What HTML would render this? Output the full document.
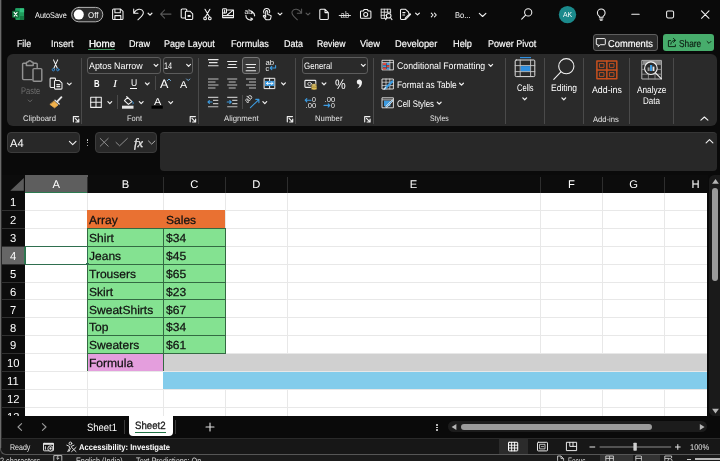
<!DOCTYPE html>
<html><head><meta charset="utf-8"><title>Excel</title>
<style>
html,body{margin:0;padding:0;background:#0a0a0a;}
body{width:720px;height:461px;position:relative;overflow:hidden;font-family:"Liberation Sans",sans-serif;}
.r{position:absolute;display:block;}
.t{position:absolute;white-space:nowrap;line-height:1;transform-origin:0 50%;text-rendering:geometricPrecision;}
#app{position:absolute;left:0;top:0;width:720px;height:461px;overflow:hidden;filter:contrast(1);}
</style></head><body><div id="app">
<div class="r" style="left:0.00px;top:0.00px;width:720.00px;height:461.00px;background:#0a0a0a;"></div>
<span class="t" style="left:35.20px;top:12px;font-size:8.20px;color:#ffffff;transform:scaleX(0.8943);">AutoSave</span>
<span class="t" style="left:455.30px;top:11px;font-size:8.30px;color:#ffffff;transform:scaleX(0.9080);">Bo...</span>
<span class="t" style="left:16.80px;top:40px;font-size:9.90px;color:#ffffff;transform:scaleX(0.8901);-webkit-text-stroke:0.15px #fff;">File</span>
<span class="t" style="left:50.50px;top:40px;font-size:9.90px;color:#ffffff;transform:scaleX(0.9087);-webkit-text-stroke:0.15px #fff;">Insert</span>
<span class="t" style="left:88.80px;top:40px;font-size:9.90px;color:#ffffff;transform:scaleX(0.9921);-webkit-text-stroke:0.35px #fff;">Home</span>
<span class="t" style="left:128.80px;top:40px;font-size:9.90px;color:#ffffff;transform:scaleX(0.9176);-webkit-text-stroke:0.15px #fff;">Draw</span>
<span class="t" style="left:164.00px;top:40px;font-size:9.90px;color:#ffffff;transform:scaleX(0.9173);-webkit-text-stroke:0.15px #fff;">Page Layout</span>
<span class="t" style="left:231.00px;top:40px;font-size:9.90px;color:#ffffff;transform:scaleX(0.9210);-webkit-text-stroke:0.15px #fff;">Formulas</span>
<span class="t" style="left:284.00px;top:40px;font-size:9.90px;color:#ffffff;transform:scaleX(0.9086);-webkit-text-stroke:0.15px #fff;">Data</span>
<span class="t" style="left:317.00px;top:40px;font-size:9.90px;color:#ffffff;transform:scaleX(0.8780);-webkit-text-stroke:0.15px #fff;">Review</span>
<span class="t" style="left:360.00px;top:40px;font-size:9.90px;color:#ffffff;transform:scaleX(0.9398);-webkit-text-stroke:0.15px #fff;">View</span>
<span class="t" style="left:395.00px;top:40px;font-size:9.90px;color:#ffffff;transform:scaleX(0.9418);-webkit-text-stroke:0.15px #fff;">Developer</span>
<span class="t" style="left:453.00px;top:40px;font-size:9.90px;color:#ffffff;transform:scaleX(0.9331);-webkit-text-stroke:0.15px #fff;">Help</span>
<span class="t" style="left:487.50px;top:40px;font-size:9.90px;color:#ffffff;transform:scaleX(0.9182);-webkit-text-stroke:0.15px #fff;">Power Pivot</span>
<div class="r" style="left:88.30px;top:49.00px;width:27.00px;height:1.25px;background:#429a62;border-radius:1px;"></div>
<div class="r" style="left:593.00px;top:33.80px;width:64.50px;height:17.20px;background:#2a2a2a;border:1px solid #5e5e5e;border-radius:3px;box-sizing:border-box;"></div>
<span class="t" style="left:608.00px;top:40px;font-size:10.00px;color:#ffffff;transform:scaleX(0.9308);-webkit-text-stroke:0.15px #fff;">Comments</span>
<div class="r" style="left:663.00px;top:33.80px;width:50.90px;height:17.20px;background:#47ad6c;border-radius:3px;"></div>
<span class="t" style="left:678.80px;top:40px;font-size:10.00px;color:#0c1a10;transform:scaleX(0.8319);-webkit-text-stroke:0.15px #0c1a10;">Share</span>
<div class="r" style="left:6.50px;top:53.80px;width:710.30px;height:71.80px;background:#2a2a2a;border-radius:6px;"></div>
<div class="r" style="left:81.10px;top:57.50px;width:0.90px;height:66.00px;background:#4a4a4a;"></div>
<div class="r" style="left:198.30px;top:57.50px;width:0.90px;height:66.00px;background:#4a4a4a;"></div>
<div class="r" style="left:295.10px;top:57.50px;width:0.90px;height:66.00px;background:#4a4a4a;"></div>
<div class="r" style="left:373.30px;top:57.50px;width:0.90px;height:66.00px;background:#4a4a4a;"></div>
<div class="r" style="left:505.10px;top:57.50px;width:0.90px;height:66.00px;background:#4a4a4a;"></div>
<div class="r" style="left:543.90px;top:57.50px;width:0.90px;height:66.00px;background:#4a4a4a;"></div>
<div class="r" style="left:582.60px;top:57.50px;width:0.90px;height:66.00px;background:#4a4a4a;"></div>
<div class="r" style="left:629.40px;top:57.50px;width:0.90px;height:66.00px;background:#4a4a4a;"></div>
<div class="r" style="left:673.10px;top:57.50px;width:0.90px;height:66.00px;background:#4a4a4a;"></div>
<div class="r" style="left:155.10px;top:76.00px;width:0.90px;height:14.00px;background:#4a4a4a;"></div>
<div class="r" style="left:117.10px;top:95.00px;width:0.90px;height:14.00px;background:#4a4a4a;"></div>
<div class="r" style="left:242.10px;top:95.00px;width:0.90px;height:14.00px;background:#4a4a4a;"></div>
<span class="t" style="left:20.80px;top:87px;font-size:9.60px;color:#6e6e6e;transform:scaleX(0.7821);">Paste</span>
<span class="t" style="left:23.00px;top:115px;font-size:8.10px;color:#e4e4e4;transform:scaleX(0.9518);">Clipboard</span>
<span class="t" style="left:127.00px;top:115px;font-size:8.10px;color:#e4e4e4;transform:scaleX(0.9255);">Font</span>
<span class="t" style="left:224.20px;top:115px;font-size:8.10px;color:#e4e4e4;transform:scaleX(0.9633);">Alignment</span>
<span class="t" style="left:314.50px;top:115px;font-size:8.10px;color:#e4e4e4;transform:scaleX(0.9545);">Number</span>
<span class="t" style="left:430.00px;top:115px;font-size:8.10px;color:#e4e4e4;transform:scaleX(0.8523);">Styles</span>
<span class="t" style="left:593.30px;top:116px;font-size:8.10px;color:#e4e4e4;transform:scaleX(0.9430);">Add-ins</span>
<div class="r" style="left:87.00px;top:56.50px;width:73.70px;height:17.30px;background:#2a2a2a;border:1px solid #5c5c5c;border-radius:3px;box-sizing:border-box;"></div>
<div class="r" style="left:162.70px;top:56.50px;width:30.50px;height:17.30px;background:#2a2a2a;border:1px solid #5c5c5c;border-radius:3px;box-sizing:border-box;"></div>
<div class="r" style="left:301.60px;top:56.50px;width:66.20px;height:17.30px;background:#2a2a2a;border:1px solid #5c5c5c;border-radius:3px;box-sizing:border-box;"></div>
<div class="r" style="left:242.30px;top:56.50px;width:17.50px;height:17.30px;background:#3a3a3a;border:1px solid #777;border-radius:3px;box-sizing:border-box;"></div>
<span class="t" style="left:89.20px;top:61px;font-size:9.40px;color:#ffffff;transform:scaleX(0.9448);">Aptos Narrow</span>
<span class="t" style="left:164.40px;top:61px;font-size:9.40px;color:#ffffff;transform:scaleX(0.7842);">14</span>
<span class="t" style="left:303.50px;top:61px;font-size:9.40px;color:#ffffff;transform:scaleX(0.8402);">General</span>
<span class="t" style="left:93.60px;top:80px;font-size:10.20px;color:#ffffff;font-weight:bold;transform:scaleX(0.7602);">B</span>
<span class="t" style="left:112.70px;top:79px;font-size:10.80px;color:#ffffff;font-style:italic;font-family:'Liberation Serif',serif;transform:scaleX(1.1399);">I</span>
<span class="t" style="left:130.60px;top:79px;font-size:9.80px;color:#ffffff;transform:scaleX(0.8760);">U</span>
<div class="r" style="left:130.40px;top:87.80px;width:6.60px;height:0.90px;background:#ffffff;"></div>
<span class="t" style="left:335.00px;top:78px;font-size:13.80px;color:#ffffff;transform:scaleX(0.8720);">%</span>
<span class="t" style="left:397.00px;top:62px;font-size:9.60px;color:#ffffff;transform:scaleX(0.9132);">Conditional Formatting</span>
<span class="t" style="left:397.00px;top:81px;font-size:9.60px;color:#ffffff;transform:scaleX(0.8710);">Format as Table</span>
<span class="t" style="left:397.00px;top:100px;font-size:9.60px;color:#ffffff;transform:scaleX(0.8159);">Cell Styles</span>
<span class="t" style="left:516.80px;top:84px;font-size:9.60px;color:#ffffff;transform:scaleX(0.7779);">Cells</span>
<span class="t" style="left:551.00px;top:84px;font-size:9.60px;color:#ffffff;transform:scaleX(0.8857);">Editing</span>
<span class="t" style="left:591.60px;top:86px;font-size:9.60px;color:#ffffff;transform:scaleX(0.9155);">Add-ins</span>
<span class="t" style="left:637.00px;top:86px;font-size:9.60px;color:#ffffff;transform:scaleX(0.8608);">Analyze</span>
<span class="t" style="left:643.20px;top:97px;font-size:9.60px;color:#ffffff;transform:scaleX(0.8383);">Data</span>
<div class="r" style="left:7.00px;top:131.50px;width:73.00px;height:21.00px;background:#282828;border:1px solid #3c3c3c;border-radius:4px;box-sizing:border-box;"></div>
<div class="r" style="left:95.00px;top:131.50px;width:62.00px;height:21.00px;background:#282828;border:1px solid #3c3c3c;border-radius:4px;box-sizing:border-box;"></div>
<div class="r" style="left:159.60px;top:131.80px;width:557.10px;height:38.80px;background:#282828;border-radius:4px;border-top:1px solid #363636;box-sizing:border-box;"></div>
<span class="t" style="left:10.20px;top:139px;font-size:11.40px;color:#ffffff;transform:scaleX(0.9753);">A4</span>
<span class="t" style="left:134.40px;top:137px;font-size:12.60px;color:#e8e8e8;font-style:italic;font-family:'Liberation Serif',serif;transform:scaleX(0.9898);-webkit-text-stroke:0.3px #e8e8e8;">fx</span>
<div class="r" style="left:86.60px;top:138.80px;width:1.80px;height:1.80px;background:#e4e4e4;border-radius:1px;"></div>
<div class="r" style="left:86.60px;top:141.65px;width:1.80px;height:1.80px;background:#e4e4e4;border-radius:1px;"></div>
<div class="r" style="left:86.60px;top:144.50px;width:1.80px;height:1.80px;background:#e4e4e4;border-radius:1px;"></div>
<div class="r" style="left:25.00px;top:192.50px;width:682.20px;height:223.00px;background:#ffffff;"></div>
<div class="r" style="left:87.10px;top:192.50px;width:1.00px;height:223.00px;background:#e8e8e8;"></div>
<div class="r" style="left:162.90px;top:192.50px;width:1.00px;height:223.00px;background:#e8e8e8;"></div>
<div class="r" style="left:224.90px;top:192.50px;width:1.00px;height:223.00px;background:#e8e8e8;"></div>
<div class="r" style="left:286.70px;top:192.50px;width:1.00px;height:223.00px;background:#e8e8e8;"></div>
<div class="r" style="left:539.90px;top:192.50px;width:1.00px;height:223.00px;background:#e8e8e8;"></div>
<div class="r" style="left:602.10px;top:192.50px;width:1.00px;height:223.00px;background:#e8e8e8;"></div>
<div class="r" style="left:664.00px;top:192.50px;width:1.00px;height:223.00px;background:#e8e8e8;"></div>
<div class="r" style="left:25.00px;top:209.90px;width:682.20px;height:1.00px;background:#e8e8e8;"></div>
<div class="r" style="left:25.00px;top:227.80px;width:682.20px;height:1.00px;background:#e8e8e8;"></div>
<div class="r" style="left:25.00px;top:245.70px;width:682.20px;height:1.00px;background:#e8e8e8;"></div>
<div class="r" style="left:25.00px;top:263.60px;width:682.20px;height:1.00px;background:#e8e8e8;"></div>
<div class="r" style="left:25.00px;top:281.50px;width:682.20px;height:1.00px;background:#e8e8e8;"></div>
<div class="r" style="left:25.00px;top:299.40px;width:682.20px;height:1.00px;background:#e8e8e8;"></div>
<div class="r" style="left:25.00px;top:317.30px;width:682.20px;height:1.00px;background:#e8e8e8;"></div>
<div class="r" style="left:25.00px;top:335.20px;width:682.20px;height:1.00px;background:#e8e8e8;"></div>
<div class="r" style="left:25.00px;top:353.10px;width:682.20px;height:1.00px;background:#e8e8e8;"></div>
<div class="r" style="left:25.00px;top:371.00px;width:682.20px;height:1.00px;background:#e8e8e8;"></div>
<div class="r" style="left:25.00px;top:388.90px;width:682.20px;height:1.00px;background:#e8e8e8;"></div>
<div class="r" style="left:25.00px;top:406.80px;width:682.20px;height:1.00px;background:#e8e8e8;"></div>
<div class="r" style="left:1.50px;top:175.00px;width:706.00px;height:17.50px;background:#0c0c0c;"></div>
<div class="r" style="left:25.00px;top:175.00px;width:62.60px;height:17.50px;background:#5e5e5e;"></div>
<div class="r" style="left:25.00px;top:191.60px;width:62.60px;height:1.20px;background:#2c7a50;"></div>
<svg class="r" style="left:8.00px;top:176.00px;" width="17.00" height="16.00" viewBox="0 0 17.00 16.00" fill="none"><path d="M15.8 2 L15.8 14.8 L2.3 14.8 Z" fill="#5c5c5c"/></svg>
<div class="r" style="left:87.10px;top:177.00px;width:1.00px;height:15.50px;background:#2e2e2e;"></div>
<div class="r" style="left:162.90px;top:177.00px;width:1.00px;height:15.50px;background:#2e2e2e;"></div>
<div class="r" style="left:224.90px;top:177.00px;width:1.00px;height:15.50px;background:#2e2e2e;"></div>
<div class="r" style="left:286.70px;top:177.00px;width:1.00px;height:15.50px;background:#2e2e2e;"></div>
<div class="r" style="left:539.90px;top:177.00px;width:1.00px;height:15.50px;background:#2e2e2e;"></div>
<div class="r" style="left:602.10px;top:177.00px;width:1.00px;height:15.50px;background:#2e2e2e;"></div>
<div class="r" style="left:664.00px;top:177.00px;width:1.00px;height:15.50px;background:#2e2e2e;"></div>
<span class="t" style="left:52.56px;top:180px;font-size:11.20px;color:#ffffff;">A</span>
<span class="t" style="left:121.76px;top:180px;font-size:11.20px;color:#ffffff;">B</span>
<span class="t" style="left:190.26px;top:180px;font-size:11.20px;color:#ffffff;">C</span>
<span class="t" style="left:252.26px;top:180px;font-size:11.20px;color:#ffffff;">D</span>
<span class="t" style="left:409.86px;top:180px;font-size:11.20px;color:#ffffff;">E</span>
<span class="t" style="left:567.88px;top:180px;font-size:11.20px;color:#ffffff;">F</span>
<span class="t" style="left:629.24px;top:180px;font-size:11.20px;color:#ffffff;">G</span>
<span class="t" style="left:691.56px;top:180px;font-size:11.20px;color:#ffffff;">H</span>
<div class="r" style="left:1.50px;top:192.50px;width:23.50px;height:223.00px;background:#0c0c0c;"></div>
<div class="r" style="left:1.50px;top:246.20px;width:23.50px;height:17.90px;background:#666666;"></div>
<div class="r" style="left:24.40px;top:246.20px;width:1.20px;height:17.90px;background:#2c7a50;"></div>
<div class="r" style="left:1.50px;top:209.90px;width:23.50px;height:1.00px;background:#303030;"></div>
<div class="r" style="left:1.50px;top:227.80px;width:23.50px;height:1.00px;background:#303030;"></div>
<div class="r" style="left:1.50px;top:245.70px;width:23.50px;height:1.00px;background:#303030;"></div>
<div class="r" style="left:1.50px;top:263.60px;width:23.50px;height:1.00px;background:#303030;"></div>
<div class="r" style="left:1.50px;top:281.50px;width:23.50px;height:1.00px;background:#303030;"></div>
<div class="r" style="left:1.50px;top:299.40px;width:23.50px;height:1.00px;background:#303030;"></div>
<div class="r" style="left:1.50px;top:317.30px;width:23.50px;height:1.00px;background:#303030;"></div>
<div class="r" style="left:1.50px;top:335.20px;width:23.50px;height:1.00px;background:#303030;"></div>
<div class="r" style="left:1.50px;top:353.10px;width:23.50px;height:1.00px;background:#303030;"></div>
<div class="r" style="left:1.50px;top:371.00px;width:23.50px;height:1.00px;background:#303030;"></div>
<div class="r" style="left:1.50px;top:388.90px;width:23.50px;height:1.00px;background:#303030;"></div>
<div class="r" style="left:1.50px;top:406.80px;width:23.50px;height:1.00px;background:#303030;"></div>
<span class="t" style="left:10.07px;top:197px;font-size:11.60px;color:#ffffff;transform:scaleX(0.9700);">1</span>
<span class="t" style="left:10.07px;top:215px;font-size:11.60px;color:#ffffff;transform:scaleX(0.9700);">2</span>
<span class="t" style="left:10.07px;top:233px;font-size:11.60px;color:#ffffff;transform:scaleX(0.9700);">3</span>
<span class="t" style="left:10.07px;top:251px;font-size:11.60px;color:#ffffff;transform:scaleX(0.9700);">4</span>
<span class="t" style="left:10.07px;top:269px;font-size:11.60px;color:#ffffff;transform:scaleX(0.9700);">5</span>
<span class="t" style="left:10.07px;top:287px;font-size:11.60px;color:#ffffff;transform:scaleX(0.9700);">6</span>
<span class="t" style="left:10.07px;top:305px;font-size:11.60px;color:#ffffff;transform:scaleX(0.9700);">7</span>
<span class="t" style="left:10.07px;top:323px;font-size:11.60px;color:#ffffff;transform:scaleX(0.9700);">8</span>
<span class="t" style="left:10.07px;top:340px;font-size:11.60px;color:#ffffff;transform:scaleX(0.9700);">9</span>
<span class="t" style="left:6.94px;top:358px;font-size:11.60px;color:#ffffff;transform:scaleX(0.9700);">10</span>
<span class="t" style="left:7.36px;top:376px;font-size:11.60px;color:#ffffff;transform:scaleX(0.9700);">11</span>
<span class="t" style="left:6.94px;top:394px;font-size:11.60px;color:#ffffff;transform:scaleX(0.9700);">12</span>
<span class="t" style="left:6.94px;top:412px;font-size:11.60px;color:#ffffff;transform:scaleX(0.9700);">13</span>
<div class="r" style="left:87.20px;top:210.40px;width:138.00px;height:17.90px;background:#e97132;"></div>
<div class="r" style="left:87.60px;top:228.30px;width:137.60px;height:125.30px;background:#84e291;"></div>
<div class="r" style="left:87.60px;top:227.80px;width:137.60px;height:1.00px;background:#336a42;"></div>
<div class="r" style="left:87.60px;top:245.70px;width:137.60px;height:1.00px;background:#336a42;"></div>
<div class="r" style="left:87.60px;top:263.60px;width:137.60px;height:1.00px;background:#336a42;"></div>
<div class="r" style="left:87.60px;top:281.50px;width:137.60px;height:1.00px;background:#336a42;"></div>
<div class="r" style="left:87.60px;top:299.40px;width:137.60px;height:1.00px;background:#336a42;"></div>
<div class="r" style="left:87.60px;top:317.30px;width:137.60px;height:1.00px;background:#336a42;"></div>
<div class="r" style="left:87.60px;top:335.20px;width:137.60px;height:1.00px;background:#336a42;"></div>
<div class="r" style="left:87.60px;top:353.10px;width:137.60px;height:1.00px;background:#336a42;"></div>
<div class="r" style="left:224.60px;top:228.30px;width:1.00px;height:125.30px;background:#336a42;"></div>
<div class="r" style="left:87.60px;top:353.60px;width:75.80px;height:17.90px;background:#e49edd;"></div>
<div class="r" style="left:163.40px;top:353.60px;width:543.80px;height:17.90px;background:#d0d0d0;"></div>
<div class="r" style="left:163.40px;top:371.50px;width:543.80px;height:17.90px;background:#83cceb;"></div>
<div class="r" style="left:87.10px;top:228.30px;width:1.00px;height:143.20px;background:#336a42;"></div>
<div class="r" style="left:162.90px;top:228.30px;width:1.00px;height:143.20px;background:#336a42;"></div>
<span class="t" style="left:89.20px;top:215px;font-size:11.70px;color:#111111;transform:scaleX(1.0300);-webkit-text-stroke:0.25px #111;">Array</span>
<span class="t" style="left:165.50px;top:215px;font-size:11.70px;color:#111111;transform:scaleX(1.0300);-webkit-text-stroke:0.25px #111;">Sales</span>
<span class="t" style="left:89.20px;top:233px;font-size:11.70px;color:#111111;transform:scaleX(1.0300);-webkit-text-stroke:0.25px #111;">Shirt</span>
<span class="t" style="left:165.50px;top:233px;font-size:11.70px;color:#111111;transform:scaleX(1.0300);-webkit-text-stroke:0.25px #111;">$34</span>
<span class="t" style="left:89.20px;top:251px;font-size:11.70px;color:#111111;transform:scaleX(1.0300);-webkit-text-stroke:0.25px #111;">Jeans</span>
<span class="t" style="left:165.50px;top:251px;font-size:11.70px;color:#111111;transform:scaleX(1.0300);-webkit-text-stroke:0.25px #111;">$45</span>
<span class="t" style="left:89.20px;top:269px;font-size:11.70px;color:#111111;transform:scaleX(1.0300);-webkit-text-stroke:0.25px #111;">Trousers</span>
<span class="t" style="left:165.50px;top:269px;font-size:11.70px;color:#111111;transform:scaleX(1.0300);-webkit-text-stroke:0.25px #111;">$65</span>
<span class="t" style="left:89.20px;top:287px;font-size:11.70px;color:#111111;transform:scaleX(1.0300);-webkit-text-stroke:0.25px #111;">Skirt</span>
<span class="t" style="left:165.50px;top:287px;font-size:11.70px;color:#111111;transform:scaleX(1.0300);-webkit-text-stroke:0.25px #111;">$23</span>
<span class="t" style="left:89.20px;top:305px;font-size:11.70px;color:#111111;transform:scaleX(1.0300);-webkit-text-stroke:0.25px #111;">SweatShirts</span>
<span class="t" style="left:165.50px;top:305px;font-size:11.70px;color:#111111;transform:scaleX(1.0300);-webkit-text-stroke:0.25px #111;">$67</span>
<span class="t" style="left:89.20px;top:322px;font-size:11.70px;color:#111111;transform:scaleX(1.0300);-webkit-text-stroke:0.25px #111;">Top</span>
<span class="t" style="left:165.50px;top:322px;font-size:11.70px;color:#111111;transform:scaleX(1.0300);-webkit-text-stroke:0.25px #111;">$34</span>
<span class="t" style="left:89.20px;top:340px;font-size:11.70px;color:#111111;transform:scaleX(1.0300);-webkit-text-stroke:0.25px #111;">Sweaters</span>
<span class="t" style="left:165.50px;top:340px;font-size:11.70px;color:#111111;transform:scaleX(1.0300);-webkit-text-stroke:0.25px #111;">$61</span>
<span class="t" style="left:89.20px;top:358px;font-size:11.70px;color:#111111;transform:scaleX(1.0300);-webkit-text-stroke:0.25px #111;">Formula</span>
<div class="r" style="left:24.6px;top:245.50px;width:63.6px;height:19.30px;border:1.4px solid #2f6f4f;box-sizing:border-box;"></div>
<div class="r" style="left:86.40px;top:262.70px;width:2.60px;height:2.60px;background:#2f6f4f;"></div>
<div class="r" style="left:0.00px;top:415.50px;width:720.00px;height:46.00px;background:#0a0a0a;"></div>
<div class="r" style="left:707.50px;top:175.00px;width:12.50px;height:240.50px;background:#0a0a0a;"></div>
<div class="r" style="left:709.30px;top:174.60px;width:11.50px;height:241.00px;background:#1a1a1a;border-radius:5.5px 0 0 5.5px;"></div>
<div class="r" style="left:711.80px;top:188.20px;width:6.30px;height:92.80px;background:#9b9b9b;border-radius:3.1px;"></div>
<svg class="r" style="left:710.50px;top:177.00px;" width="9.00" height="8.00" viewBox="0 0 9.00 8.00" fill="none"><path d="M4.5 2 L7.9 6.8 L1.1 6.8 Z" fill="#b5b5b5"/></svg>
<svg class="r" style="left:710.50px;top:406.50px;" width="9.00" height="8.00" viewBox="0 0 9.00 8.00" fill="none"><path d="M4.5 6.6 L7.9 1.8 L1.1 1.8 Z" fill="#b5b5b5"/></svg>
<span class="t" style="left:87.00px;top:423px;font-size:10.60px;color:#ffffff;transform:scaleX(0.8929);">Sheet1</span>
<div class="r" style="left:124.40px;top:420.00px;width:1.00px;height:13.50px;background:#3a3a3a;"></div>
<div class="r" style="left:129.00px;top:415.50px;width:44.00px;height:20.70px;background:#ffffff;border-radius:0 0 4px 4px;"></div>
<span class="t" style="left:135.00px;top:421px;font-size:10.60px;color:#1a1a1a;transform:scaleX(0.9108);-webkit-text-stroke:0.3px #1a1a1a;">Sheet2</span>
<div class="r" style="left:135.00px;top:431.80px;width:30.60px;height:1.50px;background:#217346;"></div>
<div class="r" style="left:175.40px;top:420.00px;width:1.00px;height:13.50px;background:#3a3a3a;"></div>
<svg class="r" style="left:14.00px;top:421.00px;" width="12.00" height="12.00" viewBox="0 0 12.00 12.00" fill="none"><path d="M7.6 2.6 L4 6 L7.6 9.4" stroke="#9a9a9a" stroke-width="1.1" stroke-linecap="round" stroke-linejoin="round"/></svg>
<svg class="r" style="left:38.00px;top:421.00px;" width="12.00" height="12.00" viewBox="0 0 12.00 12.00" fill="none"><path d="M4.4 2.6 L8 6 L4.4 9.4" stroke="#9a9a9a" stroke-width="1.1" stroke-linecap="round" stroke-linejoin="round"/></svg>
<svg class="r" style="left:204.00px;top:420.50px;" width="12.00" height="12.00" viewBox="0 0 12.00 12.00" fill="none"><path d="M6 2 V10 M2 6 H10" stroke="#e0e0e0" stroke-width="1.1" stroke-linecap="round"/></svg>
<div class="r" style="left:435.80px;top:423.90px;width:1.80px;height:1.80px;background:#ececec;border-radius:1px;"></div>
<div class="r" style="left:435.80px;top:426.65px;width:1.80px;height:1.80px;background:#ececec;border-radius:1px;"></div>
<div class="r" style="left:435.80px;top:429.40px;width:1.80px;height:1.80px;background:#ececec;border-radius:1px;"></div>
<div class="r" style="left:448.20px;top:421.30px;width:259.30px;height:11.00px;background:#1c1c1c;border-radius:5.5px;"></div>
<div class="r" style="left:460.90px;top:424.00px;width:190.90px;height:5.90px;background:#9b9b9b;border-radius:3px;"></div>
<svg class="r" style="left:450.20px;top:422.90px;" width="8.00" height="8.00" viewBox="0 0 8.00 8.00" fill="none"><path d="M1.6 4 L6.4 1 L6.4 7 Z" fill="#b5b5b5"/></svg>
<svg class="r" style="left:698.00px;top:422.90px;" width="8.00" height="8.00" viewBox="0 0 8.00 8.00" fill="none"><path d="M6.6 4 L1.8 1 L1.8 7 Z" fill="#b5b5b5"/></svg>
<div class="r" style="left:0.00px;top:449.00px;width:720.00px;height:12.00px;background:#1b1b1b;"></div>
<div class="r" style="left:0;top:438px;width:720px;height:16.9px;box-sizing:border-box;border:1px solid #565656;border-top:none;border-right:none;border-radius:0 0 0 6px;background:#171717;"></div>
<div class="r" style="left:1.50px;top:437.90px;width:718.50px;height:0.90px;background:#2a2a2a;"></div>
<div class="r" style="left:499.20px;top:439.20px;width:29.10px;height:14.80px;background:#2b2b2b;"></div>
<span class="t" style="left:9.60px;top:443px;font-size:8.40px;color:#e8e8e8;transform:scaleX(0.8401);">Ready</span>
<span class="t" style="left:78.80px;top:443px;font-size:8.40px;color:#ffffff;font-weight:bold;transform:scaleX(0.9086);">Accessibility: Investigate</span>
<span class="t" style="left:690.00px;top:443px;font-size:8.40px;color:#e8e8e8;transform:scaleX(0.8937);">100%</span>
<span class="t" style="left:-0.50px;top:457px;font-size:9.30px;color:#d8d8d8;transform:scaleX(0.7836);">2 characters</span>
<span class="t" style="left:75.80px;top:457px;font-size:9.30px;color:#d8d8d8;transform:scaleX(0.7855);">English (India)</span>
<span class="t" style="left:136.00px;top:457px;font-size:9.30px;color:#d8d8d8;transform:scaleX(0.7847);">Text Predictions: On</span>
<span class="t" style="left:568.30px;top:457px;font-size:9.30px;color:#d8d8d8;transform:scaleX(0.6910);">Focus</span>
<div class="r" style="left:600.00px;top:455.20px;width:32.50px;height:6.00px;background:#333333;"></div>
<div class="r" style="left:641.70px;top:455.20px;width:18.50px;height:6.00px;background:#333333;"></div>
<div class="r" style="left:695.30px;top:458.30px;width:25.00px;height:1.60px;background:#b8b8b8;"></div>
<div class="r" style="left:686.70px;top:458.60px;width:4.60px;height:1.00px;background:#d0d0d0;"></div>
<svg class="r" style="left:53.00px;top:455.40px;" width="10.00" height="6.00" viewBox="0 0 10.00 6.00" fill="none"><path d="M0.8 5.8 V0.6 H8.8 V5.8 M4.8 0.6 V4 M3.4 3 L4.8 4.4 L6.2 3" stroke="#d0d0d0" stroke-width="0.9"/></svg>
<svg class="r" style="left:556.50px;top:455.40px;" width="8.00" height="6.00" viewBox="0 0 8.00 6.00" fill="none"><path d="M0.6 5.8 V1 H4 L6.6 3.6 V5.8 M4 1 V3.6 H6.6" stroke="#d0d0d0" stroke-width="0.9"/></svg>
<svg class="r" style="left:604.50px;top:455.40px;" width="10.00" height="6.00" viewBox="0 0 10.00 6.00" fill="none"><path d="M0.8 5.8 V1 H8.4 V5.8 M4.6 1 V5.8 M0.8 3.4 H8.4" stroke="#d0d0d0" stroke-width="0.9"/></svg>
<svg class="r" style="left:634.50px;top:455.40px;" width="8.00" height="6.00" viewBox="0 0 8.00 6.00" fill="none"><path d="M0.8 5.8 V1 H6.4 V5.8 M0.8 3.4 H6.4" stroke="#d0d0d0" stroke-width="0.9"/></svg>
<svg class="r" style="left:663.50px;top:455.40px;" width="9.00" height="6.00" viewBox="0 0 9.00 6.00" fill="none"><path d="M0.8 5.8 V1 H7.6 V3 M0.8 3.4 H5" stroke="#d0d0d0" stroke-width="0.9"/><circle cx="6" cy="5.6" r="2" stroke="#d0d0d0" stroke-width="0.9"/></svg>
<div class="r" style="left:0.00px;top:0.00px;width:1.00px;height:448.00px;background:#6a6a6a;"></div>
<div class="r" style="left:1.00px;top:0.00px;width:0.80px;height:448.00px;background:#2a2a2a;"></div>
<svg class="r" style="left:0;top:0px" width="720" height="30" viewBox="0 0 720 30" fill="none" stroke-linecap="round" stroke-linejoin="round"><rect x="15.4" y="8.3" width="8.7" height="11.7" rx="1" fill="#1f9d5c"/><rect x="19.8" y="8.3" width="4.3" height="4" fill="#33c481"/><rect x="19.8" y="16" width="4.3" height="4" fill="#167a44"/><rect x="15.4" y="8.3" width="4.4" height="4" fill="#21a366"/><rect x="12.1" y="10.7" width="7" height="7" rx="0.8" fill="#0f6e3a"/><path d="M14.1 12.3 L17.1 16.1 M17.1 12.3 L14.1 16.1" stroke="#fff" stroke-width="1.05"/><rect x="71.6" y="7.4" width="31.2" height="14.4" rx="7.2" fill="#2a2a2a" stroke="#c4c4c4" stroke-width="0.9"/><circle cx="78.8" cy="14.6" r="5" fill="#fff"/><path d="M113.7 9 H120.6 L123 11.4 V18.4 a1.1 1.1 0 0 1 -1.1 1.1 H113.7 a1.1 1.1 0 0 1 -1.1 -1.1 V10.1 a1.1 1.1 0 0 1 1.1 -1.1 Z M114.9 9.2 V12.8 H120.3 V9.2 M114.9 19.3 V15.6 H120.8 V19.3" stroke="#f2f2f2" stroke-width="1.05"/><path d="M133.7 9 V13.3 H138 M134 13.1 C136.2 8.6 141.6 7.8 143.2 11.6 C144.4 14.8 141 16.8 137.9 19.8" stroke="#f2f2f2" stroke-width="1.05"/><path d="M148.10 13.25 l1.90 1.90 l1.90 -1.90" stroke="#f0f0f0" stroke-width="1.20"/><path d="M160.6 14.1 H171 M164.6 10 L160.6 14.1 L164.6 18.2" stroke="#5a5a5a" stroke-width="1.05"/><path d="M185 17.9 H182.1 a0.9 0.9 0 0 1 -0.9 -0.9 V9.9 a0.9 0.9 0 0 1 0.9 -0.9 H185.9 a0.9 0.9 0 0 1 0.9 0.9 V10.8" stroke="#f2f2f2" stroke-width="1.05"/><path d="M186.3 11.2 H190 L192.7 13.9 V18.6 a0.9 0.9 0 0 1 -0.9 0.9 H186.3 a0.9 0.9 0 0 1 -0.9 -0.9 V12.1 a0.9 0.9 0 0 1 0.9 -0.9 Z" stroke="#f2f2f2" stroke-width="1.05"/><rect x="187.6" y="15" width="3" height="1.9" fill="#f2f2f2"/><path d="M205 9.3 L209.5 16.9 M209.9 9.3 L205.4 16.9" stroke="#f2f2f2" stroke-width="1.05"/><circle cx="205.1" cy="18.4" r="1.35" stroke="#f2f2f2" stroke-width="1.05"/><circle cx="209.8" cy="18.4" r="1.35" stroke="#f2f2f2" stroke-width="1.05"/><path d="M222.6 12.5 V17.6 H233.5 V10 H227.5 M227.2 15 L232.6 10.7 M222.6 15.6 H233.5" stroke="#f2f2f2" stroke-width="1.05"/><rect x="222.6" y="8.7" width="3.9" height="4.3" rx="0.8" stroke="#f2f2f2" stroke-width="1.05"/><path d="M224.6 10 V13" stroke="#f2f2f2" stroke-width="1.05"/><text x="244.6" y="14.4" font-size="7.2" fill="#f2f2f2" font-family="Liberation Sans, sans-serif" textLength="7.2" lengthAdjust="spacingAndGlyphs">ab</text><path d="M245.9 15.4 a4.3 4.3 0 0 0 6.4 3.9 M254.6 15.8 a4.3 4.3 0 0 0 -2.2 -3.9 M251 20.4 L252.6 19.1 L250.7 18 M250.9 11.3 L252.5 11.9 L251.7 13.6" stroke="#f2f2f2" stroke-width="1.15"/><path d="M265.7 17.2 V11.6 a1 1 0 0 1 2 0 V14.6 L270.2 15.2 a1.1 1.1 0 0 1 0.9 1.3 L270.6 18.6 a1.5 1.5 0 0 1 -1.5 1.2 H266.8 a1.6 1.6 0 0 1 -1.3 -0.7 L263.4 16.4 a0.8 0.8 0 0 1 1.2 -1 Z" stroke="#f2f2f2" stroke-width="1.05"/><path d="M264 13.2 a3.1 3.1 0 1 1 5.6 -0.6" stroke="#f2f2f2" stroke-width="1.05"/><path d="M278.10 13.05 l1.90 1.90 l1.90 -1.90" stroke="#f0f0f0" stroke-width="1.20"/><path d="M301.6 9 V13.3 H297.3 M301.3 13.1 C299.1 8.6 293.7 7.8 292.1 11.6 C290.9 14.8 294.3 16.8 297.4 19.8" stroke="#5a5a5a" stroke-width="1.05"/><path d="M306.10 13.05 l1.90 1.90 l1.90 -1.90" stroke="#5a5a5a" stroke-width="1.20"/><path d="M320.7 9.3 H325 L328.3 12.6 V18.6 a0.9 0.9 0 0 1 -0.9 0.9 H320.7 a0.9 0.9 0 0 1 -0.9 -0.9 V10.2 a0.9 0.9 0 0 1 0.9 -0.9 Z M325 9.5 V12.6 H328.1" stroke="#f2f2f2" stroke-width="1.05"/><text x="340.6" y="18.2" font-size="8.2" fill="#dcdcdc" font-family="Liberation Sans, sans-serif" textLength="8.6" lengthAdjust="spacingAndGlyphs">ab</text><path d="M339.2 15.5 H350.5" stroke="#f2f2f2" stroke-width="0.9"/><path d="M361.4 10.9 H363.3 L364.3 9.4 H367.2 L368.2 10.9 H370 a0.9 0.9 0 0 1 0.9 0.9 V17.4 a0.9 0.9 0 0 1 -0.9 0.9 H361.4 a0.9 0.9 0 0 1 -0.9 -0.9 V11.8 a0.9 0.9 0 0 1 0.9 -0.9 Z" stroke="#f2f2f2" stroke-width="1.05"/><circle cx="365.7" cy="14.5" r="2" stroke="#f2f2f2" stroke-width="1.05"/><path d="M381.2 9.2 H390.6 V13 M381.2 9.2 V18.4 H385.6 M381.2 12.2 H390.6 M381.2 15.3 H385.4 M384.3 9.2 V18.4 M387.4 9.2 V12.4" stroke="#dcdcdc" stroke-width="0.95"/><circle cx="388.7" cy="15.7" r="2.3" stroke="#f2f2f2" stroke-width="1.05"/><path d="M390.4 17.5 L392 19.6 M386.9 17.6 L385.6 19.6" stroke="#f2f2f2" stroke-width="1.05"/><path d="M404.6 19.5 H401.4 a0.9 0.9 0 0 1 -0.9 -0.9 V10.2 a0.9 0.9 0 0 1 0.9 -0.9 H405.6 L408.6 12.2 V13.2 M402.8 12.6 H405 M402.8 15 H404.6" stroke="#f2f2f2" stroke-width="1.05"/><path d="M409.9 13.6 L410.6 14.4 L406.2 19 L405 19.4 L405.3 18.2 Z" stroke="#f2f2f2" stroke-width="1.05"/><path d="M415.60 13.05 l1.90 1.90 l1.90 -1.90" stroke="#f0f0f0" stroke-width="1.20"/><path d="M431.3 13.1 L433.1 15 L431.3 16.9 M434.5 13.1 L436.3 15 L434.5 16.9" stroke="#f2f2f2" stroke-width="1.05"/><path d="M479.3 13.3 L482.6 16.5 L485.9 13.3" stroke="#f2f2f2" stroke-width="1.1"/><circle cx="528.2" cy="12.4" r="3.6" stroke="#f2f2f2" stroke-width="1.05"/><path d="M525.6 15.1 L521.7 19.2" stroke="#f2f2f2" stroke-width="1.05"/><circle cx="567.5" cy="14.6" r="8.7" fill="#1b8a8c"/><path d="M599.4 17.3 V16.4 C598.2 15.5 597.4 14.3 597.4 12.9 a3.85 3.85 0 0 1 7.7 0 C605.1 14.3 604.3 15.5 603.1 16.4 V17.3 Z M599.7 18.9 H602.8 M600.4 20.3 H602.1" stroke="#f2f2f2" stroke-width="1.05"/><path d="M631.8 14.2 H639.2" stroke="#f2f2f2" stroke-width="1.05"/><rect x="666.6" y="10.9" width="7" height="7" rx="1.3" stroke="#f2f2f2" stroke-width="1.05"/><path d="M701.5 10.8 L709 18.3 M709 10.8 L701.5 18.3" stroke="#f2f2f2" stroke-width="1.05"/></svg>
<span class="t" style="left:87.60px;top:11px;font-size:8.40px;color:#ffffff;transform:scaleX(0.9412);">Off</span>
<span class="t" style="left:563.00px;top:11px;font-size:7.40px;color:#ffffff;transform:scaleX(0.9319);">AK</span>
<svg class="r" style="left:0;top:32px" width="720" height="22" viewBox="0 32 720 22" fill="none" stroke-linecap="round" stroke-linejoin="round"><path d="M597 38.6 H604.6 a0.7 0.7 0 0 1 0.7 0.7 V44 a0.7 0.7 0 0 1 -0.7 0.7 H600.2 L598.2 46.6 V44.7 H597 a0.7 0.7 0 0 1 -0.7 -0.7 V39.3 a0.7 0.7 0 0 1 0.7 -0.7 Z" stroke="#f2f2f2" stroke-width="1"/><path d="M670.6 40.6 H668.4 V46.6 H675.4 V44.8 M670.8 44.2 C671 41.6 672.6 40.4 675 40.4 M673.4 38.4 L675.6 40.4 L673.4 42.4" stroke="#0e2a16" stroke-width="1"/><path d="M707.10 41.45 l1.90 1.90 l1.90 -1.90" stroke="#0e2a16" stroke-width="1.00"/></svg>
<svg class="r" style="left:0;top:53px" width="720" height="74" viewBox="0 53 720 74" fill="none" stroke-linecap="round" stroke-linejoin="round"><path d="M25.8 63.2 H23.6 a1 1 0 0 0 -1 1 V78.6 a1 1 0 0 0 1 1 H32 M33.6 63.2 H36.2 a1 1 0 0 1 1 1 V67.4" stroke="#929292" stroke-width="1.45"/><path d="M26.4 65.4 V63 a1 1 0 0 1 1 -1 H28 a1.9 1.9 0 0 1 3.6 0 H32.2 a1 1 0 0 1 1 1 V65.4 Z" stroke="#929292" stroke-width="1.45"/><rect x="33" y="68.6" width="8.8" height="12.6" rx="1" fill="#2a2a2a" stroke="#929292" stroke-width="1.45"/><path d="M28.20 100.00 l1.80 1.80 l1.80 -1.80" stroke="#6a6a6a" stroke-width="0.95"/><path d="M53.5 59.9 L57.3 68.2 M57.7 59.9 L53.9 68.2" stroke="#f0f0f0" stroke-width="1.05"/><circle cx="53.4" cy="69.7" r="1.2" stroke="#3588cf" stroke-width="1"/><circle cx="57.8" cy="69.7" r="1.2" stroke="#3588cf" stroke-width="1"/><path d="M53.6 87.4 H51 a0.9 0.9 0 0 1 -0.9 -0.9 V79 a0.9 0.9 0 0 1 0.9 -0.9 H54.6 a0.9 0.9 0 0 1 0.9 0.9 V79.6" stroke="#f0f0f0" stroke-width="1.05"/><path d="M55.4 80.4 H59.2 L62 83.2 V88.2 a0.9 0.9 0 0 1 -0.9 0.9 H55.4 a0.9 0.9 0 0 1 -0.9 -0.9 V81.3 a0.9 0.9 0 0 1 0.9 -0.9 Z M56.8 84.6 H59.8 M56.8 86.6 H59.8" stroke="#f0f0f0" stroke-width="1.05"/><path d="M67.40 83.05 l1.90 1.90 l1.90 -1.90" stroke="#f0f0f0" stroke-width="1.20"/><path d="M61.4 97.2 L57.6 101.2" stroke="#e8e8e8" stroke-width="1.9"/><path d="M55 100.2 L59.2 104" stroke="#e8e8e8" stroke-width="1.3"/><path d="M54.2 101.4 L58 105 L54.6 107.8 L50.2 104.6 Z" fill="#f2b24c" stroke="#f2b24c" stroke-width="0.8"/><path d="M73.40 121.80 V116.60 H78.60" stroke="#f0f0f0" stroke-width="1.15"/><path d="M75.20 118.40 L78.60 121.80 M78.80 119.00 V122.00 H75.80" stroke="#f0f0f0" stroke-width="1.15"/><path d="M154.10 64.45 l1.90 1.90 l1.90 -1.90" stroke="#f0f0f0" stroke-width="1.20"/><path d="M186.70 64.45 l1.90 1.90 l1.90 -1.90" stroke="#f0f0f0" stroke-width="1.20"/><path d="M145.40 82.85 l1.90 1.90 l1.90 -1.90" stroke="#f0f0f0" stroke-width="1.20"/><path d="M167.4 80.6 L169 79 L170.6 80.6" stroke="#7fc0f0" stroke-width="0.9"/><path d="M186.6 79 L188.2 80.6 L189.8 79" stroke="#7fc0f0" stroke-width="0.9"/><rect x="90.7" y="97.2" width="10.6" height="10.2" stroke="#f0f0f0" stroke-width="1.05"/><path d="M96 97.2 V107.4 M90.7 102.3 H101.3" stroke="#f0f0f0" stroke-width="1.05"/><path d="M107.90 101.65 l1.90 1.90 l1.90 -1.90" stroke="#f0f0f0" stroke-width="1.20"/><path d="M127.6 97.4 L132 101.6 L128.4 104.4 L124.4 100.6 Z M127.6 97.4 L126.6 96.6" stroke="#f0f0f0" stroke-width="1.05"/><path d="M132.6 101.6 C133.4 102.6 133.6 103.4 132.8 104" stroke="#3d9be0" stroke-width="1"/><rect x="122" y="105.7" width="11.5" height="3" fill="#e6e6e6"/><path d="M139.30 101.65 l1.90 1.90 l1.90 -1.90" stroke="#f0f0f0" stroke-width="1.20"/><rect x="151.5" y="105.8" width="11.3" height="2.9" fill="#000"/><path d="M168.80 101.65 l1.90 1.90 l1.90 -1.90" stroke="#f0f0f0" stroke-width="1.20"/><path d="M190.20 121.80 V116.60 H195.40" stroke="#f0f0f0" stroke-width="1.15"/><path d="M192.00 118.40 L195.40 121.80 M195.60 119.00 V122.00 H192.60" stroke="#f0f0f0" stroke-width="1.15"/><path d="M208.00 59.60 H218.50 M209.00 62.60 H217.50 M208.00 65.70 H218.50 " stroke="#e8e8e8" stroke-width="1.1" stroke-linecap="butt"/><path d="M227.20 61.50 H237.20 M228.20 64.50 H236.20 M227.20 67.50 H237.20 " stroke="#e8e8e8" stroke-width="1.1" stroke-linecap="butt"/><path d="M245.70 64.50 H256.00 M246.70 67.50 H255.00 M245.70 70.70 H256.00 " stroke="#e8e8e8" stroke-width="1.1" stroke-linecap="butt"/><path d="M208.00 79.00 H218.50 M208.00 82.00 H215.50 M208.00 85.00 H218.50 M208.00 88.00 H215.50 " stroke="#bdbdbd" stroke-width="1.1" stroke-linecap="butt"/><path d="M227.20 79.00 H237.20 M228.70 82.00 H235.70 M227.20 85.00 H237.20 M228.70 88.00 H235.70 " stroke="#bdbdbd" stroke-width="1.1" stroke-linecap="butt"/><path d="M246.00 79.00 H256.00 M249.00 82.00 H256.00 M246.00 85.00 H256.00 M249.00 88.00 H256.00 " stroke="#bdbdbd" stroke-width="1.1" stroke-linecap="butt"/><text x="265.5" y="65" font-size="7" fill="#f0f0f0" font-family="Liberation Sans, sans-serif" textLength="8.6" lengthAdjust="spacingAndGlyphs">ab</text><text x="265.5" y="70.6" font-size="7" fill="#f0f0f0" font-family="Liberation Sans, sans-serif">c</text><path d="M275.6 65.6 V68 H270.2 M271.8 66.4 L270.2 68 L271.8 69.6" stroke="#3d9be0" stroke-width="1.1"/><rect x="264.5" y="78.3" width="10.3" height="10.3" stroke="#f0f0f0" stroke-width="1"/><path d="M269.6 78.3 V80.8 M269.6 86.1 V88.6" stroke="#f0f0f0" stroke-width="1"/><rect x="265" y="80.9" width="9.3" height="5.1" fill="#3d9be0"/><path d="M266.6 83.4 H272.8 M267.8 82.2 L266.6 83.4 L267.8 84.6 M271.6 82.2 L272.8 83.4 L271.6 84.6" stroke="#fff" stroke-width="0.9"/><path d="M281.60 82.85 l1.90 1.90 l1.90 -1.90" stroke="#f0f0f0" stroke-width="1.20"/><path d="M208 97.4 H218.3 M208 106.7 H218.3 M213 100.4 H218.3 M213 103.6 H218.3" stroke="#bdbdbd" stroke-width="1.1" stroke-linecap="butt"/><path d="M208 102 H212 M209.4 100.6 L208 102 L209.4 103.4" stroke="#3d9be0" stroke-width="1.1"/><path d="M227.2 97.4 H237.4 M227.2 106.7 H237.4 M232.2 100.4 H237.4 M232.2 103.6 H237.4" stroke="#bdbdbd" stroke-width="1.1" stroke-linecap="butt"/><path d="M227.2 102 H231.2 M229.8 100.6 L231.2 102 L229.8 103.4" stroke="#3d9be0" stroke-width="1.1"/><text transform="translate(247.4 103.4) rotate(-48)" font-size="7.6" fill="#f0f0f0" font-family="Liberation Sans, sans-serif">ab</text><path d="M250.4 107.6 L258.8 99.6 M255.8 99.4 H258.9 V102.6" stroke="#3d9be0" stroke-width="1.1"/><path d="M262.90 101.65 l1.90 1.90 l1.90 -1.90" stroke="#f0f0f0" stroke-width="1.20"/><path d="M287.30 121.80 V116.60 H292.50" stroke="#f0f0f0" stroke-width="1.15"/><path d="M289.10 118.40 L292.50 121.80 M292.70 119.00 V122.00 H289.70" stroke="#f0f0f0" stroke-width="1.15"/><path d="M361.40 64.45 l1.90 1.90 l1.90 -1.90" stroke="#f0f0f0" stroke-width="1.20"/><rect x="304.9" y="80.4" width="10.9" height="7" rx="0.8" stroke="#ececec" stroke-width="1.1"/><ellipse cx="309.6" cy="83.9" rx="1.9" ry="1.5" stroke="#ececec" stroke-width="0.8"/><path d="M311.3 85 H316.9 V88.9 a2.8 1.1 0 0 1 -5.6 0 Z" fill="#e8c55a" stroke="#2a2a2a" stroke-width="0.5"/><ellipse cx="314.1" cy="85" rx="2.8" ry="1.15" fill="#f0d070" stroke="#2a2a2a" stroke-width="0.4"/><path d="M311.4 87 a2.8 1.1 0 0 0 5.4 0" stroke="#6a5a20" stroke-width="0.5"/><path d="M322.10 82.85 l1.90 1.90 l1.90 -1.90" stroke="#f0f0f0" stroke-width="1.20"/><path d="M359.2 79.6 a2.5 2.5 0 1 0 0.2 5 C359.6 86.4 358.6 87.6 357 88.6 C360.2 88 362 85.6 362 82.6 A2.7 2.7 0 0 0 359.2 79.6 Z" fill="#f0f0f0"/><path d="M305.2 100.2 H311 M306.8 98.6 L305.2 100.2 L306.8 101.8" stroke="#3d9be0" stroke-width="1.1"/><text x="312" y="102.2" font-size="7" fill="#f0f0f0" font-family="Liberation Sans, sans-serif">0</text><text x="305.6" y="108" font-size="7" fill="#f0f0f0" font-family="Liberation Sans, sans-serif" textLength="10.6" lengthAdjust="spacingAndGlyphs">.00</text><text x="324.6" y="102.2" font-size="7" fill="#f0f0f0" font-family="Liberation Sans, sans-serif" textLength="10.6" lengthAdjust="spacingAndGlyphs">.00</text><text x="331" y="108" font-size="7" fill="#f0f0f0" font-family="Liberation Sans, sans-serif">0</text><path d="M324 105.4 H329.8 M328.2 103.8 L329.8 105.4 L328.2 107" stroke="#3d9be0" stroke-width="1.1"/><path d="M364.70 121.80 V116.60 H369.90" stroke="#f0f0f0" stroke-width="1.15"/><path d="M366.50 118.40 L369.90 121.80 M370.10 119.00 V122.00 H367.10" stroke="#f0f0f0" stroke-width="1.15"/><rect x="382.4" y="60.3" width="11" height="9.6" fill="#2a2a2a" stroke="#e8e8e8" stroke-width="0.9"/><rect x="383" y="62.8" width="3.2" height="2.2" fill="#e0443c"/><rect x="386.6" y="62.8" width="3" height="2.2" fill="#3d9be0"/><rect x="383" y="65.3" width="3.2" height="2" fill="#3d9be0"/><rect x="386.6" y="65.3" width="3" height="2" fill="#e0443c"/><rect x="383" y="67.5" width="3.2" height="2" fill="#e0443c"/><rect x="386.6" y="67.5" width="3" height="2" fill="#3d9be0"/><path d="M382.4 62.6 H393.4 M389.9 60.3 V69.9" stroke="#e8e8e8" stroke-width="0.7"/><rect x="382.4" y="79" width="11" height="10" stroke="#e8e8e8" stroke-width="0.9"/><path d="M382.4 82.2 H393.4 M382.4 85.6 H393.4 M386 79 V89 M389.8 79 V89" stroke="#e8e8e8" stroke-width="0.7"/><path d="M385.2 88.4 L392.4 81.4" stroke="#3d9be0" stroke-width="2.2"/><path d="M384 89.4 L385.6 87.6" stroke="#e8e8e8" stroke-width="1.2"/><rect x="382.4" y="97.8" width="11" height="10" stroke="#e8e8e8" stroke-width="0.9"/><rect x="384" y="100.6" width="6.4" height="5.6" fill="#3d9be0"/><path d="M382.4 99.8 H393.4" stroke="#e8e8e8" stroke-width="0.7"/><path d="M386.4 106.8 L392.4 100.6" stroke="#e8e8e8" stroke-width="2"/><path d="M386.4 106.8 L392.2 100.8" stroke="#3d9be0" stroke-width="0.9"/><path d="M488.80 64.45 l1.90 1.90 l1.90 -1.90" stroke="#f0f0f0" stroke-width="1.20"/><path d="M459.60 83.25 l1.90 1.90 l1.90 -1.90" stroke="#f0f0f0" stroke-width="1.20"/><path d="M437.30 102.25 l1.90 1.90 l1.90 -1.90" stroke="#f0f0f0" stroke-width="1.20"/><rect x="515.2" y="60" width="19.6" height="16.6" rx="1" stroke="#e0e0e0" stroke-width="1"/><path d="M515.2 65.6 H534.8 M515.2 71.6 H534.8 M520.2 60 V76.6 M530.6 60 V76.6" stroke="#c8c8c8" stroke-width="0.9"/><rect x="520.7" y="66.1" width="9.4" height="5" fill="#2f8fe0"/><path d="M520 57.6 H531" stroke="#2f8fe0" stroke-width="1.2" stroke-linecap="butt"/><path d="M522.80 97.85 l1.90 1.90 l1.90 -1.90" stroke="#f0f0f0" stroke-width="1.20"/><circle cx="566.3" cy="66.2" r="7.6" stroke="#f0f0f0" stroke-width="1.1"/><path d="M560.9 71.8 L553.8 79.4" stroke="#f0f0f0" stroke-width="1.1"/><path d="M561.90 97.85 l1.90 1.90 l1.90 -1.90" stroke="#f0f0f0" stroke-width="1.20"/><rect x="596.9" y="61" width="19.9" height="17.8" stroke="#c9501e" stroke-width="1.5"/><path d="M606.85 61 V78.8 M596.9 69.9 H616.8" stroke="#c9501e" stroke-width="1.5"/><rect x="599.8" y="63.6" width="4.2" height="3.8" stroke="#c9501e" stroke-width="0.9"/><rect x="599.8" y="72.6" width="4.2" height="3.8" stroke="#c9501e" stroke-width="0.9"/><rect x="609.8" y="63.6" width="4.2" height="3.8" stroke="#c9501e" stroke-width="0.9"/><rect x="609.8" y="72.6" width="4.2" height="3.8" stroke="#c9501e" stroke-width="0.9"/><rect x="642.2" y="60.4" width="19.2" height="18.6" stroke="#b4b4b4" stroke-width="1"/><path d="M642.2 64.6 H661.4 M642.2 69.4 H661.4 M642.2 74.2 H661.4 M648.4 60.4 V79 M655 60.4 V79" stroke="#9a9a9a" stroke-width="0.8"/><rect x="642.7" y="60.9" width="18.2" height="3.4" fill="#8a8a8a"/><circle cx="650.9" cy="68.2" r="6.3" fill="#2a2a2a" stroke="#f0f0f0" stroke-width="1.1"/><rect x="647.6" y="67.4" width="2" height="3.6" fill="#9a9a9a"/><rect x="650" y="65" width="2.2" height="6" fill="#3d9be0"/><rect x="652.6" y="66.6" width="1.8" height="4.4" fill="#e8e8e8"/><path d="M655.4 72.8 L661.4 78.8" stroke="#f0f0f0" stroke-width="1.2"/><path d="M700.9 120.2 L704.4 117 L707.9 120.2" stroke="#f0f0f0" stroke-width="1.1"/></svg>
<span class="t" style="left:159.80px;top:78px;font-size:12.20px;color:#ffffff;transform:scaleX(1.0322);">A</span>
<span class="t" style="left:180.20px;top:81px;font-size:10.00px;color:#ffffff;transform:scaleX(1.0644);">A</span>
<span class="t" style="left:153.70px;top:98px;font-size:9.80px;color:#ffffff;transform:scaleX(1.1167);">A</span>
<svg class="r" style="left:0;top:130px" width="720" height="42" viewBox="0 130 720 42" fill="none" stroke-linecap="round" stroke-linejoin="round"><path d="M69.4 141.3 L72.7 144.6 L76 141.3" stroke="#f0f0f0" stroke-width="1.1"/><path d="M100.2 138.4 L108.2 146.2 M108.2 138.4 L100.2 146.2" stroke="#8e8e8e" stroke-width="1"/><path d="M116 142.4 L119.6 145.8 L127.4 138.4" stroke="#8e8e8e" stroke-width="1"/><path d="M148.5 141 L151.7 144.1 L154.9 141" stroke="#b0b0b0" stroke-width="1"/><path d="M706.1 142.9 L709.5 139.6 L712.9 142.9" stroke="#f0f0f0" stroke-width="1.1"/></svg>
<svg class="r" style="left:0;top:438px" width="720" height="17" viewBox="0 438 720 17" fill="none" stroke-linecap="round" stroke-linejoin="round"><rect x="43.5" y="443.4" width="10" height="7.4" rx="0.8" stroke="#e8e8e8" stroke-width="0.95"/><rect x="43.2" y="442.9" width="10.6" height="1.9" fill="#e8e8e8"/><path d="M45.4 446.6 V449.2" stroke="#e8e8e8" stroke-width="0.95"/><circle cx="50.5" cy="448.5" r="2.7" fill="#171717" stroke="#e8e8e8" stroke-width="0.95"/><circle cx="50.5" cy="448.5" r="1.15" fill="#e8e8e8"/><circle cx="70.4" cy="443.4" r="1.35" stroke="#e8e8e8" stroke-width="0.95"/><path d="M66.8 445.2 L69.4 446.3 V448.4 L67.8 451.5 M74 445.2 L71.4 446.3 V447 M70.4 448.6 L69 451.4" stroke="#e8e8e8" stroke-width="0.95"/><path d="M71.6 447.4 L76 451.6 M76 447.4 L71.6 451.6" stroke="#e8e8e8" stroke-width="0.95"/><rect x="508.5" y="442.3" width="9.2" height="8.6" rx="0.6" stroke="#fff" stroke-width="1"/><path d="M508.5 445.2 H517.7 M508.5 448 H517.7 M511.6 442.3 V450.9 M514.6 442.3 V450.9" stroke="#fff" stroke-width="0.9"/><rect x="537.5" y="442.3" width="10" height="8.6" rx="0.8" stroke="#e8e8e8" stroke-width="1"/><rect x="540" y="444.3" width="5" height="4.6" stroke="#e8e8e8" stroke-width="0.8"/><path d="M541.4 446.6 H543.6" stroke="#e8e8e8" stroke-width="0.7"/><path d="M566.8 442.3 H576.6 V450.6 H566.8 Z M569.8 442.3 V446.4 H576.6 M573 442.3 V446.4" stroke="#e8e8e8" stroke-width="1"/><path d="M589.9 447 H594.8" stroke="#e8e8e8" stroke-width="1"/><path d="M600 447 H670.8" stroke="#8c8c8c" stroke-width="1"/><rect x="633.4" y="442.7" width="3.4" height="8" rx="0.6" fill="#cfcfcf"/><path d="M675.4 447 H680.2 M677.8 444.6 V449.4" stroke="#e8e8e8" stroke-width="1"/></svg>
</div></body></html>
